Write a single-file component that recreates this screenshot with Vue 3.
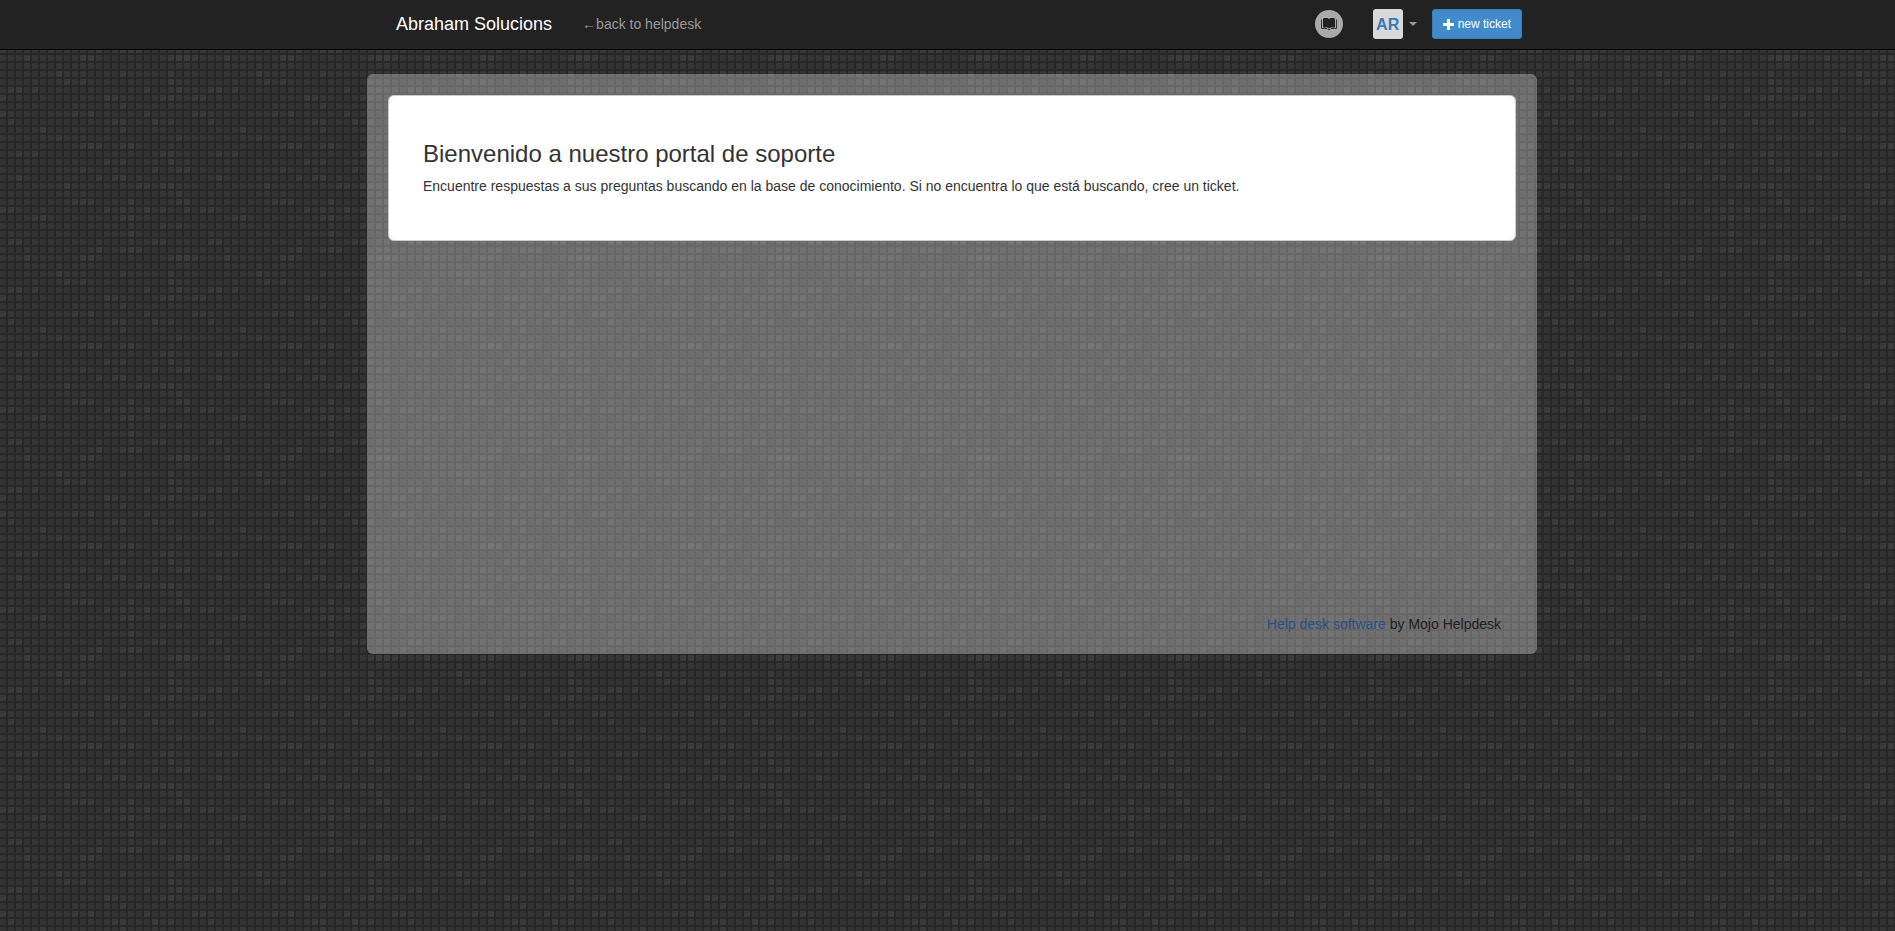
<script setup>
const cols = 25
const shades = [
  '1112111101221000100012332',
  '0001110101110000010000110',
  '0001011211100102111102011',
  '0000100121210100100002110',
  '0220200100010000102001211',
  '2010010000110221100122112',
  '0010100001100102010101100',
  '2101001112120100102010002',
  '0200000000010122010212000',
  '0010120001100102000110000',
  '1101011211100100000011211',
  '0000010001232012210001000',
  '0121200000000010100122110',
  '0001000101000212001102010',
  '1001000111210010000201220',
  '0121000101002022010000000',
  '0010111121110101122122111',
  '0101000110100000000011200',
  '0101001012220010200001220',
  '2210010010000212112121020',
  '0001221001011012211000000',
  '1010011010010110100021210',
  '0101000110000111210000000',
  '0220101001101000101220110',
  '1001001010012012220000110',
]
const cells = shades.flatMap((row, y) => [...row].map((v, x) => ({ x: x * 8, y: y * 8, tone: 'tone' + v, id: y * cols + x })))
</script>

<template>
  <div class="page">
    <svg class="mosaic" aria-hidden="true">
      <defs>
        <pattern id="mosaic" width="200" height="200" y="55" patternUnits="userSpaceOnUse">
          <rect v-for="c in cells" :key="c.id" :class="c.tone" :x="c.x" :y="c.y" width="6" height="6" />
        </pattern>
      </defs>
      <rect width="100%" height="100%" fill="url(#mosaic)" />
    </svg>

    <header class="navbar">
      <div class="bar">
        <a class="brand" href="#">Abraham Solucions</a>
        <a class="back" href="#">←back to helpdesk</a>
        <nav class="tools">
          <a class="kb" href="#" aria-label="Knowledge base">
            <svg width="28" height="28" viewBox="0 0 28 28" aria-hidden="true">
              <circle cx="14" cy="14" r="14" fill="#aaa" />
              <path d="M8 9L9 8H12.500L14 9L15.500 8H19L20 9V17.500H15.500L14 18.500L12.500 17.500H8Z" fill="#222" />
              <path d="M6.500 9.500V18.500H12L13 19.500H15L16 18.500H21.500V9.500" fill="none" stroke="#333" />
            </svg>
          </a>
          <button class="user" type="button" aria-label="Account menu">
            <span class="avatar">AR</span>
            <span class="caret"></span>
          </button>
          <button class="new" type="button">
            <svg width="11" height="11" viewBox="0 0 11 11" aria-hidden="true"><path d="M4 0H7V4H11V7H7V11H4V7H0V4H4Z" fill="#fff" /></svg>
            new ticket
          </button>
        </nav>
      </div>
    </header>

    <div class="content">
      <main class="panel">
        <section class="card">
          <h1>Bienvenido a nuestro portal de soporte</h1>
          <p>Encuentre respuestas a sus preguntas buscando en la base de conocimiento. Si no encuentra lo que está buscando, cree un ticket.</p>
        </section>
        <footer><a href="#">Help desk software</a> by Mojo Helpdesk</footer>
      </main>
    </div>
  </div>
</template>

<style>
body { margin: 0; background: #282828; }
</style>

<style scoped>
.page { position: relative; min-height: 100vh; box-sizing: border-box; padding-bottom: 20px; font: 14px/20px "Liberation Sans", Arial, sans-serif; color: #333; isolation: isolate; }
.mosaic { position: absolute; inset: 0; width: 100%; height: 100%; z-index: -1; }
.tone0 { fill: #323232; }
.tone1 { fill: #353535; }
.tone2 { fill: #393939; }
.tone3 { fill: #3c3c3c; }
a { text-decoration: none; }
button { font-family: inherit; cursor: pointer; }
.navbar { padding: 0 0 1px 9px; background: #222; border-bottom: 1px solid #080808; }
.bar { box-sizing: border-box; max-width: 1170px; height: 48px; margin: 0 auto; padding: 0 15px 0 29px; display: flex; align-items: center; }
.brand { color: #fff; font-size: 18px; }
.back { color: #999; margin-left: 30px; }
.tools { margin-left: auto; display: flex; align-items: center; }
.kb { display: flex; margin-right: 30px; }
.user { display: flex; align-items: center; gap: 6px; padding: 0; border: 0; background: none; margin-right: 15px; }
.avatar { width: 30px; height: 30px; border-radius: 3px; background: #d9d9d9; color: #337ab7; font-size: 16px; font-weight: bold; line-height: 31px; text-align: center; }
.caret { border: 4px solid transparent; border-top-color: #999; border-bottom: 0; }
.new { display: flex; align-items: center; gap: 4px; height: 30px; padding: 0 10px; border: 1px solid #357ebd; border-radius: 3px; background: #428bca; color: #fff; font-size: 12px; }
.content { padding-left: 9px; }
.panel { box-sizing: border-box; max-width: 1170px; min-height: 580px; margin: 24px auto 0; padding: 21px 21px 20px; display: flex; flex-direction: column; background: rgba(255, 255, 255, 0.3); border-radius: 6px; }
.card { padding: 44px 34px; background: #fff; border: 1px solid #ccc; border-radius: 6px; }
h1 { margin: 0 0 8px; font-size: 24px; font-weight: normal; line-height: 28px; }
p { margin: 0; }
footer { margin-top: auto; padding-right: 15px; text-align: right; color: #222; }
footer a { color: #2a5088; }
</style>
